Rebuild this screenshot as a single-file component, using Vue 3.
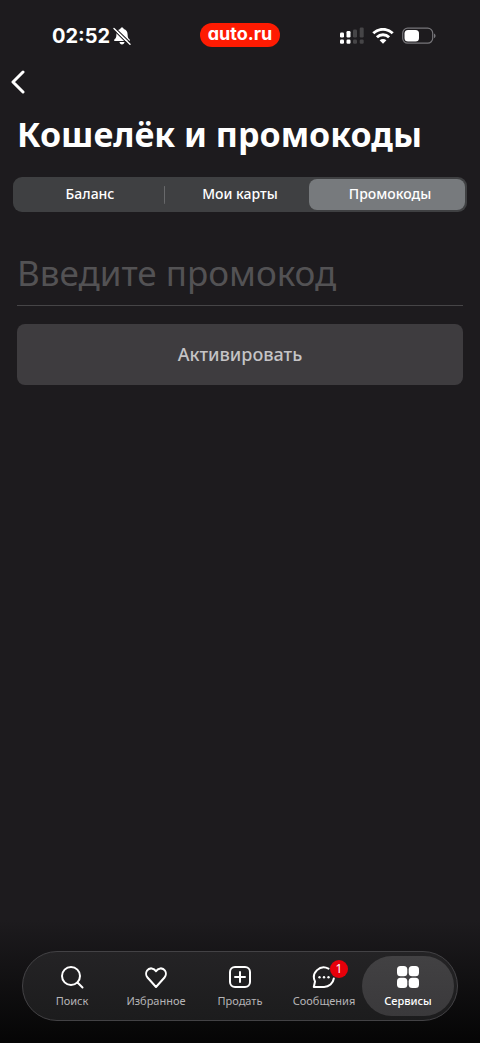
<script setup>
import { ref } from 'vue'

const tabs = ['Баланс', 'Мои карты', 'Промокоды']
const activeTab = ref(2)
const promo = ref('')
const navItems = [
  { id: 'search', label: 'Поиск' },
  { id: 'heart', label: 'Избранное' },
  { id: 'plus', label: 'Продать' },
  { id: 'chat', label: 'Сообщения', badge: 1 },
  { id: 'grid', label: 'Сервисы' },
]
const activeNav = ref('grid')
</script>

<template>
  <div class="screen">
    <header class="status">
      <div class="clock">
        <span class="time">02:52</span>
        <svg class="bell" width="18" height="18" viewBox="0 0 18 18" aria-hidden="true">
          <path d="M9 .5c1 0 1.700.6 1.700 1.500 2.600.8 3.900 2.800 3.900 5.500 0 2.700.6 3.800 1.600 4.600.7.6.8 1.200.4 2H1.400c-.4-.8-.3-1.400.4-2 1-.8 1.600-1.900 1.600-4.600 0-2.700 1.300-4.700 3.900-5.500C7.300 1.100 8 .5 9 .5zM6.500 15h5c-.2 1.500-1.100 2.400-2.500 2.400S6.700 16.500 6.500 15z" fill="#fff" />
          <path d="M0 2.200 16 18.200M1.500 .3 18 16.300" stroke="#1d1b1e" stroke-width="1.100" />
          <path d="M1 1.500 17 17.200" stroke="#fff" stroke-width="1.400" stroke-linecap="round" />
        </svg>
      </div>
      <div class="logo">auto.ru</div>
      <div class="indicators">
        <svg width="25" height="18" viewBox="0 0 25 18" aria-hidden="true">
          <g fill="#fff">
            <rect x="1" y="5.500" width="4" height="5" rx="1.200" /><rect x="7.500" y="4" width="4" height="6.500" rx="1.200" />
            <rect x="1" y="12.500" width="4" height="4.300" rx="1.200" /><rect x="7.500" y="12.500" width="4" height="4.300" rx="1.200" />
          </g>
          <g fill="#464547">
            <rect x="14" y="2.500" width="4" height="8" rx="1.200" /><rect x="20.700" y="0.500" width="4" height="10" rx="1.200" />
            <rect x="14" y="12.500" width="4" height="4.300" rx="1.200" /><rect x="20.700" y="12.500" width="4" height="4.300" rx="1.200" />
          </g>
        </svg>
        <svg width="22" height="16" viewBox="0 0 22 16" aria-hidden="true">
          <g fill="none" stroke="#fff" stroke-width="2.900">
            <path d="M1.300 5.300a13.800 13.800 0 0 1 19.400 0" /><path d="M4.900 9.200a8.700 8.700 0 0 1 12.200 0" />
          </g>
          <path d="M7.600 12.300a4.900 4.900 0 0 1 6.800 0L11 15.700z" fill="#fff" />
        </svg>
        <svg width="34" height="18" viewBox="0 0 34 18" aria-hidden="true">
          <rect x="0.700" y="1.200" width="30" height="15" rx="5" fill="none" stroke="#77767a" stroke-width="1.200" />
          <rect x="2.500" y="3" width="14.500" height="11.400" rx="3.500" fill="#fff" />
          <path d="M32 6.500c2 .8 2 3.800 0 4.600z" fill="#77767a" />
        </svg>
      </div>
    </header>

    <button class="back" type="button" aria-label="Назад">
      <svg width="16" height="24" viewBox="0 0 16 24" aria-hidden="true">
        <path d="M13 2 3 12l10 10" fill="none" stroke="#fff" stroke-width="3" stroke-linecap="round" stroke-linejoin="round" />
      </svg>
    </button>

    <h1>Кошелёк и промокоды</h1>

    <div class="tabs" role="tablist">
      <button v-for="(tab, i) in tabs" :key="tab" type="button" role="tab" class="tab" :class="{ active: i === activeTab }" :aria-selected="i === activeTab" @click="activeTab = i">{{ tab }}</button>
    </div>

    <form class="form" @submit.prevent>
      <input v-model="promo" type="text" placeholder="Введите промокод" aria-label="Введите промокод" />
      <button type="submit" class="submit">Активировать</button>
    </form>

    <div class="bottom">
      <nav class="nav">
        <button v-for="item in navItems" :key="item.id" type="button" class="item" :class="{ active: item.id === activeNav }" @click="activeNav = item.id">
          <span class="icon">
            <svg width="26" height="26" viewBox="0 0 26 26" fill="none" stroke="#fff" stroke-width="2" stroke-linecap="round" stroke-linejoin="round" aria-hidden="true">
              <template v-if="item.id === 'search'">
                <circle cx="12" cy="12" r="9" /><path d="m18.500 18.500 5 5" />
              </template>
              <path v-else-if="item.id === 'heart'" d="M13 23 4.500 13.500C2.800 11.600 2.700 8.500 4.100 6.500 6.500 3.200 11 4 13 7.200 15 4 19.500 3.200 21.900 6.500c1.400 2 1.300 5.100-.4 7z" />
              <template v-else-if="item.id === 'plus'">
                <rect x="3" y="3" width="20" height="20" rx="5" /><path d="M13 8v10M8 13h10" />
              </template>
              <template v-else-if="item.id === 'chat'">
                <path d="M17.500 4.600A9.800 9.800 0 0 0 4 17.500L2.800 23H13A9.800 9.800 0 0 0 22.800 14.500" />
                <g fill="#fff" stroke="none"><circle cx="8.500" cy="13.300" r="1.200" /><circle cx="13" cy="13.300" r="1.200" /><circle cx="17.500" cy="13.300" r="1.200" /></g>
              </template>
              <g v-else fill="#fff" stroke="none">
                <rect x="2" y="2" width="10.300" height="10.300" rx="3.500" /><rect x="13.700" y="2" width="10.300" height="10.300" rx="3.500" />
                <rect x="2" y="13.700" width="10.300" height="10.300" rx="3.500" /><rect x="13.700" y="13.700" width="10.300" height="10.300" rx="3.500" />
              </g>
            </svg>
            <span v-if="item.badge" class="badge">{{ item.badge }}</span>
          </span>
          <span>{{ item.label }}</span>
        </button>
      </nav>
    </div>
  </div>
</template>

<style>
body {
  background: #1d1b1e;
}
</style>

<style scoped>
.screen {
  display: flex;
  flex-direction: column;
  min-height: 100vh;
  background: #1d1b1e;
  color: #fff;
  font-family: "Noto Sans", sans-serif;
}
button,
input {
  font-family: inherit;
  color: inherit;
  border: 0;
  margin: 0;
  padding: 0;
  background: none;
}
svg {
  display: block;
}
.status {
  display: grid;
  grid-template-columns: 1fr auto 1fr;
  align-items: center;
  padding: 22px 44px 0;
}
.clock {
  display: flex;
  align-items: center;
  gap: 3px;
  padding: 2px 0 0 8px;
}
.time {
  font: 700 20px/24px Inter, sans-serif;
}
.logo {
  padding: 0 8px 2px;
  border-radius: 12px;
  background: #fe1b02;
  font: 700 18px/22px Inter, sans-serif;
  font-feature-settings: "cv11";
}
.indicators {
  display: flex;
  align-items: center;
  justify-content: flex-end;
  gap: 8px;
  padding-top: 2px;
}
.back {
  align-self: flex-start;
  margin: 22px 0 0 10px;
}
h1 {
  margin: 16px 17px 0;
  font-size: 34px;
  line-height: 48px;
  font-weight: 700;
}
.tabs {
  display: grid;
  grid-template-columns: repeat(3, 1fr);
  margin: 19px 13px 0;
  padding: 2px;
  border-radius: 9px;
  background: #3f4042;
}
.tab {
  border-radius: 8px;
  font-size: 14px;
  line-height: 30px;
  padding-bottom: 1px;
  font-weight: 500;
}
.tab:first-child {
  background: linear-gradient(#68696b, #68696b) right center / 1px 18px no-repeat;
}
.tab.active {
  margin-left: -6px;
  padding-left: 6px;
  background: #777a7d;
}
.form {
  display: flex;
  flex-direction: column;
  margin: 35px 17px 0;
}
input {
  height: 59px;
  padding-bottom: 8px;
  box-sizing: border-box;
  border-bottom: 1px solid #464547;
  font-size: 35px;
  outline: none;
}
input::placeholder {
  color: #535254;
  opacity: 1;
}
.submit {
  margin-top: 18px;
  height: 61px;
  padding-bottom: 2px;
  border-radius: 8px;
  background: #3e3c3f;
  color: #c5c4c6;
  font-size: 18px;
  font-weight: 500;
}
.bottom {
  margin-top: auto;
  padding: 31px 22px 22px;
  background: linear-gradient(#1d1b1e, #050505);
}
.nav {
  display: grid;
  grid-template-columns: repeat(5, 1fr);
  padding: 4px 7px;
  border: 1px solid #434245;
  border-radius: 35px;
  background: linear-gradient(#242325, #1c1c1d);
}
.item {
  display: flex;
  flex-direction: column;
  align-items: center;
  gap: 3px;
  margin: 0 -4px;
  padding: 8px 0;
  border-radius: 31px;
  color: #b5b4b6;
  font-size: 11px;
  line-height: 15px;
  font-weight: 400;
}
.item.active {
  background: linear-gradient(#424143, #3a393b);
  color: #fff;
  font-weight: 500;
}
.icon {
  position: relative;
}
.badge {
  position: absolute;
  top: -4px;
  right: -11px;
  width: 18px;
  border-radius: 9px;
  background: #e6000a;
  color: #fff;
  line-height: 18px;
  font-size: 12px;
  text-align: center;
}
</style>
